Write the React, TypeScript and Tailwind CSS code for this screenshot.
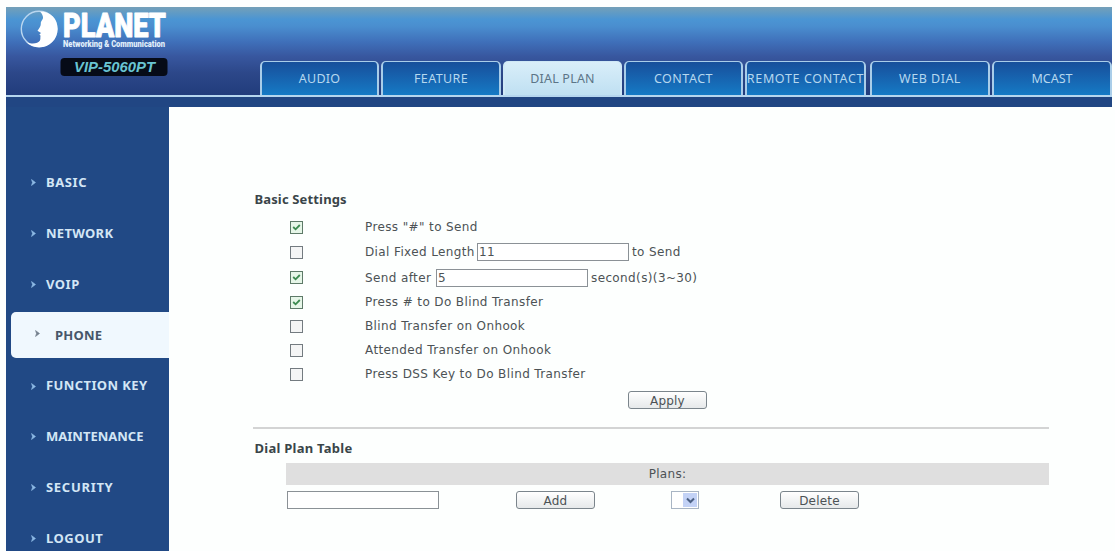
import type { ReactNode } from 'react';

const tabs = [
  { label: 'AUDIO', box: 'w-[119px] mr-[2px]', text: 'tracking-[0.2px]' },
  { label: 'FEATURE', box: 'w-[120px] mr-[2px]', text: 'tracking-[0.4px]' },
  { label: 'DIAL PLAN', box: 'w-[119px] mr-[2px]', text: 'tracking-[0.2px]' },
  { label: 'CONTACT', box: 'w-[119px] mr-[2px]', text: 'tracking-[0.5px]' },
  { label: 'REMOTE CONTACT', box: 'w-[121px] mr-[4px]', text: 'tracking-[0.65px]' },
  { label: 'WEB DIAL', box: 'w-[120px] mr-[2px]', text: 'tracking-[0.5px]' },
  { label: 'MCAST', box: 'w-[120px]', text: 'tracking-[0px]' },
];

const menu = [
  { label: 'BASIC', text: 'tracking-[0.6px]' },
  { label: 'NETWORK', text: 'tracking-[0.3px]' },
  { label: 'VOIP', text: 'tracking-[0.5px]' },
  { label: 'PHONE', text: 'tracking-[0.2px]' },
  { label: 'FUNCTION KEY', text: 'tracking-[0.4px]' },
  { label: 'MAINTENANCE', text: 'tracking-[0px]' },
  { label: 'SECURITY', text: 'tracking-[0.7px]' },
  { label: 'LOGOUT', text: 'tracking-[0.5px]' },
];

function Logo() {
  return (
    <svg width="180" height="75" viewBox="0 0 180 75" className="block overflow-visible">
      <circle cx="33" cy="22" r="17.7" fill="none" stroke="#b9d6ef" strokeWidth="1.4" />
      <path
        d="M34 4.5 C45 4.5 51.7 12 51.7 22 C51.5 32.5 43.5 40.3 33.5 40.3 C28 40.2 23.5 38.5 20 35 C25 37.5 32 37 34 33.5 C34.8 31.5 34 30.3 34.6 28.8 L33.4 27.4 L35 26 L31.5 23.8 C33.5 21 35 19 34.8 16.5 C34.6 14 37.4 12.5 37 10 C36.6 7.8 35.6 6.2 34 4.5Z"
        fill="#fff"
      />
      <text x="57" y="29.5" textLength="103" lengthAdjust="spacingAndGlyphs" fontFamily="Roboto, sans-serif" fontWeight="900" fontSize="33" fill="#fff" stroke="#fff" strokeWidth="0.9" strokeLinejoin="round">PLANET</text>
      <text x="57" y="40" textLength="102" lengthAdjust="spacingAndGlyphs" fontFamily="Roboto, sans-serif" fontWeight="900" fontSize="8.5" fill="#e2f0fb">Networking &amp; Communication</text>
      <rect x="54.5" y="51" width="107" height="18" rx="4" fill="#060b17" />
      <text x="68" y="65" textLength="81" lengthAdjust="spacingAndGlyphs" fontFamily="Liberation Sans, sans-serif" fontWeight="700" fontStyle="italic" fontSize="15.5" fill="#69c4d2">VIP-5060PT</text>
    </svg>
  );
}

function Check({ on }: { on?: boolean }) {
  return (
    <span className={`flex h-[13px] w-[13px] items-center justify-center border ${on ? 'border-[#5d7a68] bg-[#e6f6e8]' : 'border-[#737b80] bg-[#f4f5f5]'}`}>
      {on && (
        <svg width="9" height="9" viewBox="0 0 9 9">
          <path d="M1.2 4 L3.6 6.3 L7.8 2" fill="none" stroke="#3c8b50" strokeWidth="1.8" />
        </svg>
      )}
    </span>
  );
}

function Row({ on, h, children }: { on?: boolean; h: string; children: ReactNode }) {
  return (
    <div className={`flex items-center tracking-[0.38px] ${h}`}>
      <div className="ml-[37px] w-[75px]">
        <Check on={on} />
      </div>
      {children}
    </div>
  );
}

function Button({ children, className }: { children: ReactNode; className: string }) {
  return (
    <button className={`flex h-[18px] items-center justify-center rounded-[3px] border border-[#7b858c] bg-linear-to-b from-white to-[#e6e9ea] pt-px leading-none tracking-[0.2px] ${className}`}>
      {children}
    </button>
  );
}

export default function App() {
  return (
    <div className="h-[551px] w-[1115px] overflow-hidden bg-[#fdfffe] pl-[6px] pr-[3px] pt-[7px] font-['DejaVu_Sans',sans-serif] text-[12px] text-[#4c5255]">
      <header className="flex h-[88px] justify-between bg-[linear-gradient(to_bottom,#74a0b8_0%,#4b95d3_14%,#4a8ecf_22%,#3f6fb9_40%,#38579f_56%,#2c4789_75%,#213c7c_100%)]">
        <Logo />
        <nav className="flex items-end font-['Noto_Sans',sans-serif] text-[12.5px]">
          {tabs.map((t) => (
            <div
              key={t.label}
              className={`flex h-[34px] items-center justify-center whitespace-nowrap rounded-t-[5px] border-x-2 border-t pt-[2px] ${t.box} ${t.text} ${
                t.label === 'DIAL PLAN'
                  ? 'border-[#cfe8f6] bg-linear-to-b from-[#d9eef9] to-[#bfe0f2] text-[#5c7587]'
                  : 'border-[#a9cde9] bg-linear-to-b from-[#174f9b] to-[#157ac5] text-[#b6d8ef]'
              }`}
            >
              {t.label}
            </div>
          ))}
        </nav>
      </header>
      <div className="h-[2px] bg-[#b5d6ef]" />
      <div className="h-[10px] bg-[#214683]" />
      <div className="flex h-[444px]">
        <nav className="h-full w-[163px] shrink-0 bg-[#214985] pt-[50.6px] font-['Noto_Sans',sans-serif] text-[13px] font-bold text-[#d3e6f5]">
          {menu.map((m) => {
            const active = m.label === 'PHONE';
            return (
              <div key={m.label} className="flex h-[50.8px] items-center pl-[5px]">
                <div className={`flex h-[46px] w-full items-center ${active ? 'rounded-l-[5px] bg-[#f0f8fe] pl-[24px] text-[#46566a]' : 'pl-[20px]'}`}>
                  <svg width="5" height="7" viewBox="0 0 5 7" className={active ? 'mb-[3px] mr-[15px]' : 'mr-[10px]'}>
                    <path d="M0.5 0.5 L4.5 3.5 L0.5 6.5 L1.5 3.5Z" fill={active ? '#74808d' : '#8fbbe6'} stroke={active ? '#74808d' : '#8fbbe6'} strokeWidth="0.6" />
                  </svg>
                  <span className={`whitespace-nowrap ${m.text}`}>{m.label}</span>
                </div>
              </div>
            );
          })}
        </nav>
        <main className="w-[880px] pl-[84px]">
          <h2 className="mt-[82px] h-[21px] font-['Noto_Sans',sans-serif] text-[13px] font-bold leading-[21px] tracking-[0.15px] text-[#3a4549]">&#8202;Basic Settings</h2>
          <div className="mt-[5px]">
            <Row on h="h-[24px]">Press "#" to Send</Row>
            <Row h="h-[26px]">
              <span className="w-[112px] whitespace-nowrap">Dial Fixed Length</span>
              <input readOnly value="11" className="h-[18px] w-[152px] border border-[#8b9196] bg-white px-[1px] outline-none" />
              <span className="ml-[3px]">to Send</span>
            </Row>
            <Row on h="h-[25px]">
              <span className="w-[71px] whitespace-nowrap">Send after</span>
              <input readOnly value="5" className="h-[18px] w-[152px] border border-[#8b9196] bg-white px-[1px] outline-none" />
              <span className="ml-[3px]">second(s)(3~30)</span>
            </Row>
            <Row on h="h-[24px]">Press # to Do Blind Transfer</Row>
            <Row h="h-[24px]">Blind Transfer on Onhook</Row>
            <Row h="h-[24px]">Attended Transfer on Onhook</Row>
            <Row h="h-[24px]">Press DSS Key to Do Blind Transfer</Row>
          </div>
          <Button className="ml-[375px] mt-[5px] w-[79px]">Apply</Button>
          <div className="mt-[18px] h-[2px] bg-[#d3d4d4]" />
          <h2 className="mt-[9px] h-[21px] font-['Noto_Sans',sans-serif] text-[13px] font-bold leading-[21px] tracking-[0.25px] text-[#3a4549]">&#8202;Dial Plan Table</h2>
          <div className="ml-[33px] mt-[4px] flex h-[22px] items-center justify-center bg-[#dfdfdf] tracking-[0.3px]">Plans:</div>
          <div className="ml-[34px] mt-[6px] flex items-center">
            <input readOnly className="h-[18px] w-[152px] border border-[#8b9196] bg-white outline-none" />
            <Button className="ml-[77px] w-[79px]">Add</Button>
            <div className="ml-[76px] flex h-[18px] w-[28px] justify-end border border-[#a9b5c4] bg-white p-[1px]">
              <span className="flex w-[14px] items-center justify-center bg-[#c3d2f6]">
                <svg width="9" height="7" viewBox="0 0 9 7">
                  <path d="M1 1.5 L4.5 5 L8 1.5" fill="none" stroke="#4c6185" strokeWidth="2" />
                </svg>
              </span>
            </div>
            <Button className="ml-[81px] w-[79px]">Delete</Button>
          </div>
        </main>
      </div>
    </div>
  );
}
